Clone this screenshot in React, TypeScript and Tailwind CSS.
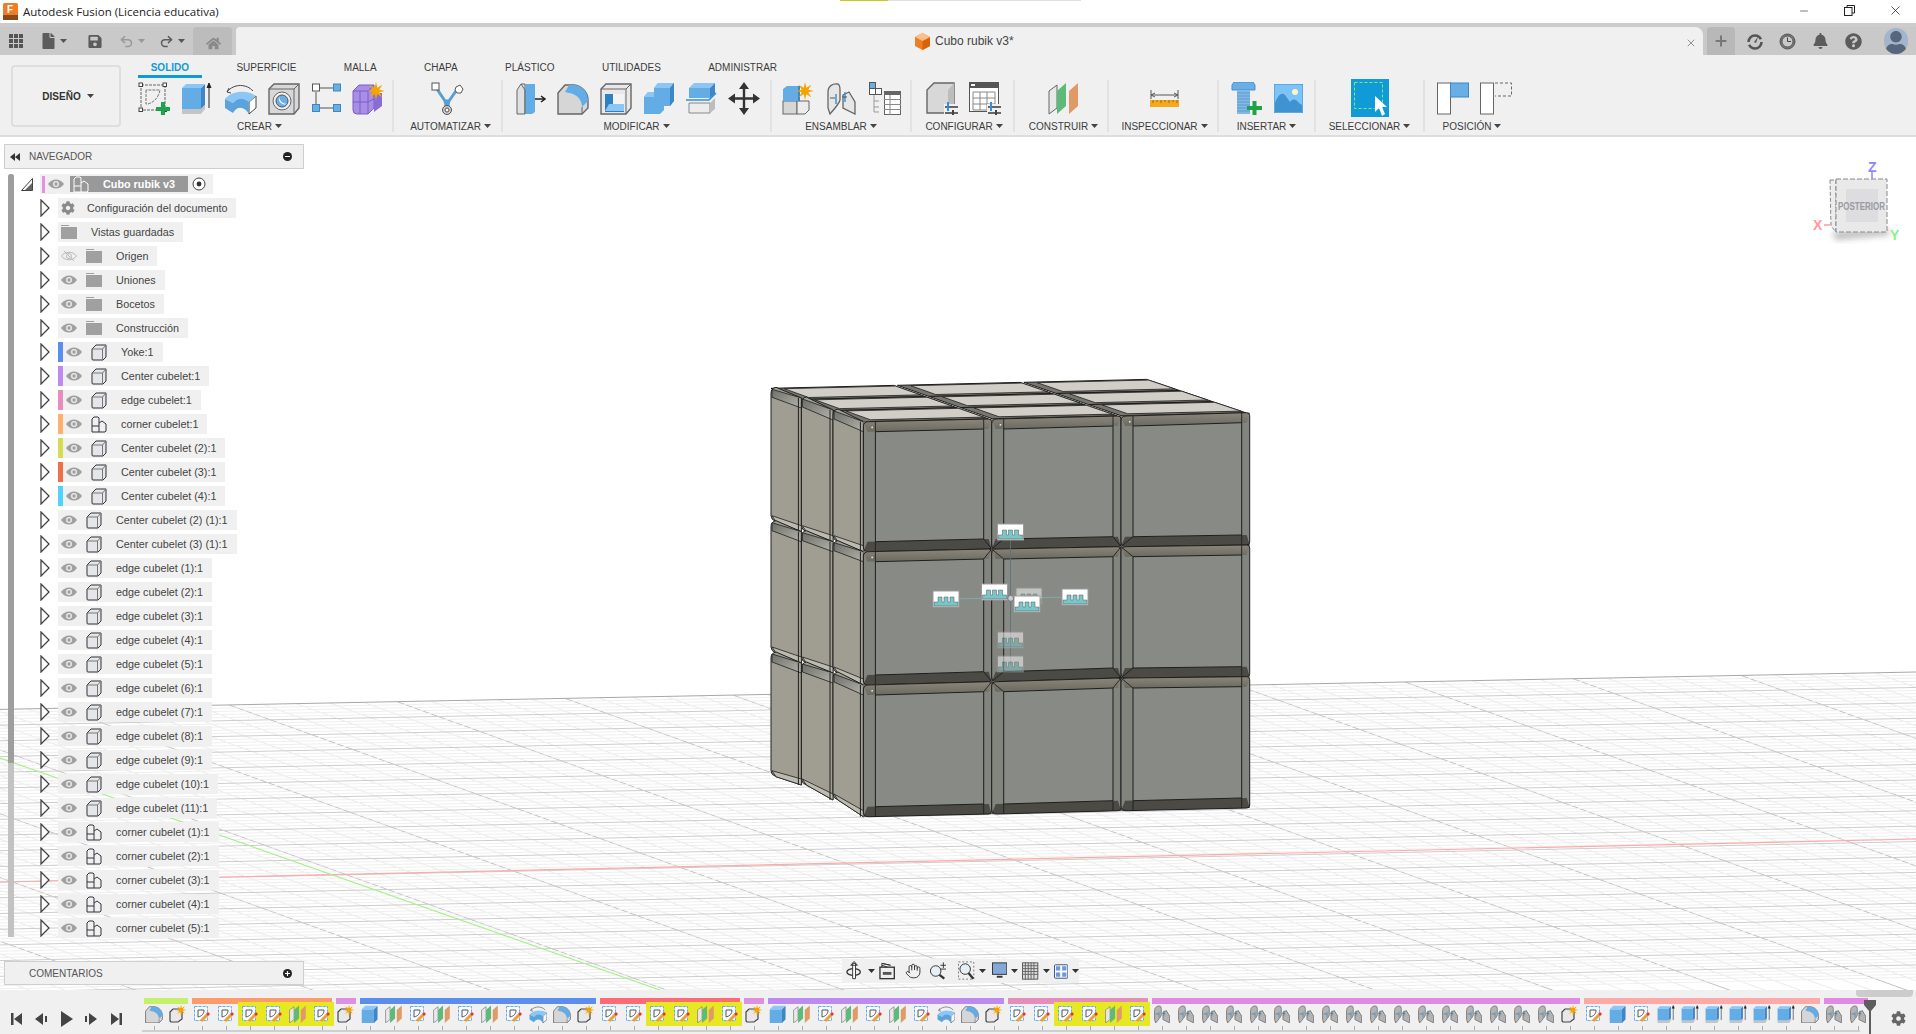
import type { ReactNode } from "react";
import { FaBell, FaCog, FaFile, FaHome, FaQuestionCircle, FaSave, FaUser } from "react-icons/fa";
import { Hand, Minus, Plus, Redo2, Undo2, X } from "lucide-react";

const lerp = (a: number, b: number, t: number) => a + (b - a) * t;
const poly = (pts: number[][]) => pts.map((p) => p.join(",")).join(" ");

function starPoints(cx: number, cy: number, r1: number, r2: number, n = 8) {
  const out: number[][] = [];
  for (let i = 0; i < n * 2; i++) {
    const r = i % 2 ? r2 : r1;
    const a = (Math.PI * i) / n;
    out.push([cx + r * Math.cos(a), cy + r * Math.sin(a)]);
  }
  return poly(out);
}

function Svg({ w, h, s = 1, children }: { w: number; h: number; s?: number; children: ReactNode }) {
  return (
    <svg width={w * s} height={h * s} viewBox={`0 0 ${w} ${h}`} className="shrink-0">
      {children}
    </svg>
  );
}

function Caret({ color = "#444" }: { color?: string }) {
  return (
    <svg width="7" height="4" viewBox="0 0 7 4" className="shrink-0">
      <path d="M0 0H7L3.5 4Z" fill={color} />
    </svg>
  );
}

// ---- ribbon icons ----
function SketchIcon() {
  return (
    <Svg w={32} h={33}>
      <rect x="3" y="3" width="24" height="25" fill="none" stroke="#666" strokeDasharray="3 1" />
      {[[1, 1], [25, 1], [1, 26], [25, 26]].map(([x, y]) => (
        <rect key={`${x}-${y}`} x={x} y={y} width="3.5" height="3.5" fill="#fff" stroke="#444" />
      ))}
      <path d="M8 8V22H10C17 20 21 14 22 8Z" fill="none" stroke="#777" strokeDasharray="3 1" />
      <path d="M18 27H32M25 20V33" stroke="#1fa34a" strokeWidth="4" />
    </Svg>
  );
}

function ExtrudeIcon({ s = 1, arrow = true }: { s?: number; arrow?: boolean }) {
  return (
    <Svg w={31} h={32} s={s}>
      <path d="M1 6H20V27H1Z" fill="#63ace5" />
      <path d="M20 6L24 2V23L20 27Z" fill="#3f86c4" />
      <path d="M1 6L5 2H24L20 6Z" fill="#8cc6f5" />
      {arrow && <path d="M1 27H20L24 23V27L20 32H1Z" fill="#c4c4c4" />}
      {arrow && <path d="M28 26V3M26 6L28 1L30 6" fill="#222" stroke="#222" />}
    </Svg>
  );
}

function SolidBox({ s = 1 }: { s?: number }) {
  return (
    <Svg w={24} h={26} s={s}>
      <path d="M1 6H18V25H1Z" fill="#63ace5" />
      <path d="M18 6L23 1V20L18 25Z" fill="#3f86c4" />
      <path d="M1 6L6 1H23L18 6Z" fill="#8cc6f5" />
    </Svg>
  );
}

function SweepIcon({ s = 1 }: { s?: number }) {
  return (
    <Svg w={33} h={33} s={s}>
      <path d="M25 20L32 14V26L25 32Z" fill="#fff" stroke="#444" />
      <path d="M1 17C8 8 24 8 32 14L25 20C19 15 13 16 9 21Z" fill="#8cc6f5" />
      <path d="M1 17L9 21C13 16 19 15 25 20V32C20 24 13 24 9 31L1 26Z" fill="#5ba3dd" />
      <path d="M3 10C10 1 23 2 29 9M5 6L3 10L7 11" fill="none" stroke="#444" />
    </Svg>
  );
}

function HoleIcon() {
  return (
    <Svg w={32} h={33}>
      <path d="M1 7L6 2H31V26L26 32H1Z" fill="#d8d8d8" stroke="#666" strokeWidth="1.4" />
      <path d="M1 7H26V32M26 7L31 2" fill="none" stroke="#666" />
      <circle cx="14" cy="19" r="9" fill="#efefef" stroke="#666" />
      <circle cx="14" cy="19" r="6" fill="#6aaee6" stroke="#555" />
      <path d="M11 15A6 6 0 0 0 19 22A8 8 0 0 1 11 15Z" fill="#fff" />
    </Svg>
  );
}

function PatternIcon() {
  return (
    <Svg w={29} h={30}>
      <path d="M7 5H21M4 9V21M7 25H21" stroke="#555" />
      <rect x="0.5" y="1" width="7" height="7" fill="#fff" stroke="#555" />
      <rect x="21.5" y="1" width="7" height="7" fill="#6aaee6" stroke="#3f86c4" />
      <rect x="0.5" y="21.5" width="7" height="7" fill="#6aaee6" stroke="#3f86c4" />
      <rect x="21.5" y="21.5" width="7" height="7" fill="#6aaee6" stroke="#3f86c4" />
    </Svg>
  );
}

function NewFormIcon() {
  return (
    <Svg w={32} h={33}>
      <path d="M1 9L7 3H22V26L16 32H5Q1 32 1 28Z" fill="#a98ee6" stroke="#7a5cc8" />
      <path d="M1 9H16V32M16 9L22 3M1 20H16L27 14M8 9V32" fill="none" stroke="#7a5cc8" />
      <path d="M22 11H30V24L22 30Z" fill="#8a6cd6" />
      <polygon points={starPoints(24, 9, 9, 3.5)} fill="#f5a300" />
    </Svg>
  );
}

function AutomateIcon() {
  return (
    <Svg w={33} h={33}>
      <path d="M6 7L14 19C15 21 15 23 15 26M25 9L18 19C17 21 17 23 17 26M14 19H18" fill="none" stroke="#5a9fd4" strokeWidth="3" />
      <rect x="1" y="1" width="7" height="7" fill="#fff" stroke="#555" />
      <polygon points="25,5 29,3 32,7 30,11 26,11 24,8" fill="#fff" stroke="#555" />
      <circle cx="16" cy="28" r="4.5" fill="#ccc" stroke="#555" />
      <circle cx="16" cy="28" r="2" fill="#fff" stroke="#555" />
    </Svg>
  );
}

function PressPullIcon() {
  return (
    <Svg w={30} h={33}>
      <path d="M1 8L5 2H9V32H1Z" fill="#e0e0e0" stroke="#666" />
      <path d="M9 2H19V30L16 32H9Z" fill="#63ace5" />
      <path d="M5 2L9 8V32" fill="none" stroke="#666" />
      <path d="M19 17H28M25 14L29 17L25 20" fill="none" stroke="#222" strokeWidth="1.5" />
    </Svg>
  );
}

function FilletIcon({ s = 1 }: { s?: number }) {
  return (
    <Svg w={32} h={33} s={s}>
      <path d="M1 11L8 3H16C24 3 31 10 31 18V26L25 32H1Z" fill="#d6d6d6" stroke="#666" strokeWidth="1.4" />
      <path d="M12 3H17C25 3 31 10 31 19L25 25C25 18 20 12 12 11L8 10Z" fill="#63ace5" />
      <path d="M25 25V32" stroke="#666" />
    </Svg>
  );
}

function ShellIcon() {
  return (
    <Svg w={32} h={33}>
      <path d="M1 7L6 2H31V26L26 32H1Z" fill="#e8e8e8" stroke="#666" strokeWidth="1.4" />
      <path d="M1 7H26V32M26 7L31 2" fill="none" stroke="#666" />
      <path d="M5 12H13V24H24V30H5Z" fill="#2f7fc4" />
      <path d="M13 12H24V24H13Z" fill="#f3f3f3" />
      <path d="M9 22H24V29H5Z" fill="#8cc6f5" />
    </Svg>
  );
}

function CombineIcon() {
  return (
    <Svg w={32} h={33}>
      <path d="M11 6L15 1H31V19L27 24H11Z" fill="#63ace5" />
      <path d="M15 1H31L27 6H11Z" fill="#8cc6f5" />
      <path d="M27 6L31 1V19L27 24Z" fill="#3f86c4" />
      <path d="M1 15L5 10H21V28L17 32H1Z" fill="#63ace5" />
      <path d="M5 10H11V15H1Z" fill="#8cc6f5" />
    </Svg>
  );
}

function SplitIcon() {
  return (
    <Svg w={31} h={33}>
      <path d="M3 6H24V16H3Z" fill="#63ace5" />
      <path d="M3 6L8 1H29L24 6Z" fill="#8cc6f5" />
      <path d="M24 6L29 1V12L24 16Z" fill="#3f86c4" />
      <path d="M0 18H23L30 11" fill="none" stroke="#2f8fe0" strokeWidth="1.6" />
      <path d="M3 21H24V31H3Z" fill="#ececec" stroke="#888" />
      <path d="M24 21L29 16V27L24 31Z" fill="#bdbdbd" />
    </Svg>
  );
}

function MoveIcon() {
  return (
    <Svg w={32} h={33}>
      <path d="M16 3V30M2 16.5H30" stroke="#333" strokeWidth="2.4" />
      <path d="M16 0L21 7H11ZM16 33L21 26H11ZM0 16.5L7 11.5V21.5ZM32 16.5L25 11.5V21.5Z" fill="#333" />
    </Svg>
  );
}

function AsmNewIcon() {
  return (
    <Svg w={32} h={33}>
      <rect x="1" y="19" width="14" height="13" fill="#d6d6d6" stroke="#666" />
      <path d="M15 19H27V28L23 32H15Z" fill="#ececec" stroke="#666" />
      <path d="M1 7L5 4H17V19H1Z" fill="#63ace5" />
      <path d="M17 4V19" stroke="#3f86c4" strokeWidth="2" />
      <polygon points={starPoints(23, 9, 9, 3.5)} fill="#f5a300" />
    </Svg>
  );
}

function JointIcon({ s = 1, dark = false }: { s?: number; dark?: boolean }) {
  const fill = dark ? "#b4b4b4" : "#e6e6e6";
  return (
    <Svg w={29} h={33} s={s}>
      <path d="M1 26V10C1 4 6 1 11 2C13 3 13 6 13 8V18C12 22 8 26 3 32Z" fill={fill} stroke="#666" strokeWidth="1.3" />
      <path d="M16 13L22 10L28 20V32L16 26Z" fill={fill} stroke="#666" strokeWidth="1.3" />
      <path d="M9 12V22M18 10V20" stroke="#2f8fe0" strokeWidth="1.4" />
      <path d="M3 16H8M15 15H20" stroke="#555" />
    </Svg>
  );
}

function JointTableIcon() {
  return (
    <Svg w={32} h={33}>
      <rect x="0.5" y="0.5" width="6" height="6" fill="#6aaee6" stroke="#555" />
      <rect x="0.5" y="6.5" width="6" height="6" fill="#fff" stroke="#555" />
      <rect x="6.5" y="6.5" width="6" height="6" fill="#fff" stroke="#555" />
      <path d="M5 13V30H10M5 19H10M5 25H10" fill="none" stroke="#999" />
      <rect x="15.5" y="9.5" width="16" height="23" fill="#fff" stroke="#666" />
      <rect x="15" y="9" width="17" height="4" fill="#666" />
      <path d="M15 17.5H32M15 22.5H32M15 27.5H32M21 13V33" stroke="#888" />
    </Svg>
  );
}

function SliderBits() {
  return (
    <>
      <rect x="18" y="22" width="14" height="10" fill="#f0f0f0" />
      <path d="M19 25H32M19 31H32" stroke="#666" strokeWidth="2" />
      <path d="M22 20V29" stroke="#2f8fe0" strokeWidth="2" />
      <rect x="26" y="28" width="2" height="5" fill="#444" />
    </>
  );
}

function ConfigBoxIcon() {
  return (
    <Svg w={32} h={33}>
      <path d="M1 8L8 1H28V24L22 31H1Z" fill="#d8d8d8" stroke="#666" strokeWidth="1.4" />
      <path d="M22 8L28 1V24L22 31Z" fill="#bdbdbd" />
      <SliderBits />
    </Svg>
  );
}

function ConfigTableIcon() {
  return (
    <Svg w={32} h={33}>
      <rect x="0.5" y="0.5" width="29" height="29" fill="#fff" stroke="#555" />
      <rect x="0" y="0" width="30" height="6" fill="#555" />
      <rect x="2" y="2" width="4" height="2" fill="#fff" />
      <path d="M4 10H26V28H4ZM4 16H26M4 22H26M11 10V28M18 10V28" fill="none" stroke="#888" />
      <SliderBits />
    </Svg>
  );
}

function PlaneIcon({ s = 1 }: { s?: number }) {
  return (
    <Svg w={31} h={33} s={s}>
      <path d="M1 9L9 3V26L1 32Z" fill="#e8e8e8" stroke="#666" />
      <path d="M9 9L18 1V24L9 32Z" fill="#5dbb7a" />
      <path d="M21 9L30 1V24L21 32Z" fill="#e09a68" />
    </Svg>
  );
}

function MeasureIcon() {
  return (
    <Svg w={29} h={17}>
      <path d="M1 0V9M28 0V9M2 5H27M5 3L1 5L5 7M24 3L28 5L24 7" fill="none" stroke="#555" />
      <rect x="0" y="10" width="29" height="7" fill="#f5a81c" />
      <path d="M3 10V13M7 10V12M11 10V13M15 10V12M19 10V13M23 10V12M27 10V13" stroke="#9c6a00" />
    </Svg>
  );
}

function BoltIcon() {
  return (
    <Svg w={31} h={33}>
      <path d="M1 3L3 0H22L24 3V8H1Z" fill="#6aaee6" stroke="#4a8fcc" />
      <rect x="6" y="8" width="13" height="24" fill="#84b8e4" />
      <path d="M6 11H19M6 14H19M6 17H19M6 20H19M6 23H19M6 26H19M6 29H19" stroke="#5a9ad0" />
      <path d="M16 26H31M23.5 19V33" stroke="#1fa34a" strokeWidth="4" />
    </Svg>
  );
}

function ImageIcon() {
  return (
    <Svg w={29} h={29}>
      <rect x="0" y="0" width="29" height="29" fill="#7cc3f7" stroke="#3f8fcc" />
      <circle cx="21" cy="8" r="3" fill="#fff3c0" />
      <path d="M1 28V19C4 11 8 8 11 11L16 18C19 14 22 15 25 19L28 21V28Z" fill="#3f93d0" />
    </Svg>
  );
}

function SelectIcon() {
  return (
    <div className="w-[38px] h-[38px] shrink-0 bg-[#0f9ad8] flex items-center justify-center">
      <Svg w={38} h={38}>
        <rect x="3.5" y="3.5" width="28" height="26" fill="none" stroke="#8ce86a" strokeDasharray="3 2" />
        <path d="M24 17V33L28 29L31 37L34 35L31 28L36 28Z" fill="#fff" />
      </Svg>
    </div>
  );
}

function PosAIcon() {
  return (
    <Svg w={32} h={33}>
      <rect x="0.5" y="1" width="13" height="31" fill="#fff" stroke="#666" />
      <rect x="13.5" y="1" width="18" height="14" fill="#6aaee6" stroke="#3f86c4" />
    </Svg>
  );
}

function PosBIcon() {
  return (
    <Svg w={32} h={33}>
      <rect x="0.5" y="1" width="13" height="31" fill="#fff" stroke="#666" />
      <path d="M15 1H31.5V14H15" fill="none" stroke="#666" strokeDasharray="3 2" />
    </Svg>
  );
}

// ---- timeline-only icons ----
function SketchT() {
  return (
    <Svg w={18} h={18}>
      <rect x="1.5" y="1.5" width="13" height="14" fill="#f8fbff" stroke="#6aaee6" strokeDasharray="3 1" />
      <path d="M5 5V12C9 11 11 9 11 5Z" fill="none" stroke="#555" />
      <path d="M8 16L14 10" stroke="#f0a030" strokeWidth="3" />
      <path d="M14 10L16 8" stroke="#e33" strokeWidth="3" />
    </Svg>
  );
}

function StarT() {
  return (
    <Svg w={18} h={18}>
      <path d="M1 7L4 4H13V14L9 17H2L1 16Z" fill="#e8e8e8" stroke="#444" strokeWidth="1.2" />
      <polygon points={starPoints(12, 5, 5.5, 2)} fill="#f5a300" />
    </Svg>
  );
}

type TimelineKind = "fillet" | "star" | "sketch" | "box" | "plane" | "sweep" | "joint" | "extrude";

function TimelineIcon({ kind }: { kind: TimelineKind }) {
  if (kind === "fillet") return <FilletIcon s={0.56} />;
  if (kind === "star") return <StarT />;
  if (kind === "sketch") return <SketchT />;
  if (kind === "box") return <SolidBox s={0.72} />;
  if (kind === "plane") return <PlaneIcon s={0.56} />;
  if (kind === "sweep") return <SweepIcon s={0.56} />;
  if (kind === "joint") return <JointIcon s={0.56} dark />;
  return <ExtrudeIcon s={0.58} />;
}

const midSeq: TimelineKind[] = ["box", "plane", "sketch", "plane", "sketch", "plane", "sketch", "sweep", "fillet", "star"];
const timelineItems: TimelineKind[] = [
  "fillet", "star",
  "sketch", "sketch", "sketch", "sketch", "plane", "sketch", "star",
  ...midSeq,
  "sketch", "sketch", "sketch", "sketch", "plane", "sketch", "star",
  ...midSeq,
  "sketch", "sketch", "sketch", "sketch", "plane", "sketch",
  ...Array<TimelineKind>(17).fill("joint"), "star",
  "sketch", "box", "sketch", "extrude", "extrude", "extrude", "extrude", "extrude", "extrude", "fillet",
  "joint", "joint",
];
const highlighted = new Set([4, 5, 6, 7, 21, 22, 23, 24, 38, 39, 40, 41]);

const timelineBars = [
  { w: "w-[44px]", c: "bg-[#c5f06a]" },
  { w: "w-[140px]", c: "bg-[#ff9b6b]" },
  { w: "w-[20px]", c: "bg-[#df8fdf]" },
  { w: "w-[236px]", c: "bg-[#5b8def]" },
  { w: "w-[140px]", c: "bg-[#ff6b75]" },
  { w: "w-[20px]", c: "bg-[#df8fdf]" },
  { w: "w-[236px]", c: "bg-[#bd8bf0]" },
  { w: "w-[140px]", c: "bg-[#e58ebc]" },
  { w: "w-[428px]", c: "bg-[#e08ae6]" },
  { w: "w-[236px]", c: "bg-[#ffa8a8]" },
  { w: "w-[44px]", c: "bg-[#e08ae6]" },
];

// ---- tree icons ----
function Arrow() {
  return (
    <svg width="10" height="18" viewBox="0 0 10 18" className="shrink-0">
      <path d="M1 1L9 9L1 17Z" fill="#fff" stroke="#444" strokeWidth="1.3" />
    </svg>
  );
}

function Eye({ off = false }: { off?: boolean }) {
  if (off) {
    return (
      <svg width="16" height="12" viewBox="0 0 16 12" className="shrink-0">
        <path d="M0.5 6C4 1 12 1 15.5 6C12 11 4 11 0.5 6Z" fill="none" stroke="#bbb" />
        <circle cx="8" cy="6" r="2.5" fill="none" stroke="#bbb" />
        <path d="M3 1L13 11" stroke="#bbb" />
      </svg>
    );
  }
  return (
    <svg width="16" height="12" viewBox="0 0 16 12" className="shrink-0">
      <path d="M0 6C4 0 12 0 16 6C12 12 4 12 0 6Z" fill="#a0a0a0" />
      <circle cx="8" cy="6" r="3" fill="#ececec" />
      <circle cx="8" cy="6" r="1.7" fill="#a0a0a0" />
    </svg>
  );
}

function Folder() {
  return (
    <svg width="16" height="14" viewBox="0 0 16 14" className="shrink-0">
      <path d="M0 0H8V1H0ZM0 2H16V14H0Z" fill="#a0a0a0" />
    </svg>
  );
}

function CubeSmall() {
  return (
    <svg width="16" height="17" viewBox="0 0 16 17" className="shrink-0">
      <path d="M1 5L5 1H15V13L12 16H2Q1 16 1 15Z" fill="#e4e6ea" stroke="#333" />
      <path d="M1 5H11.5V16M11.5 5L15 1" fill="none" stroke="#777" />
    </svg>
  );
}

function MultiCube({ light = false }: { light?: boolean }) {
  const line = light ? "#fff" : "#333";
  return (
    <svg width="16" height="17" viewBox="0 0 16 17" className="shrink-0">
      <path d="M1 3L3 1H7L8 2V7L11 5L15 8V15L14 16H1Z" fill={light ? "#999" : "#f0f0f4"} stroke={line} />
      <path d="M1 10H8M8 7V16" fill="none" stroke={line} />
    </svg>
  );
}

type RowKind = "gear" | "saved" | "folder" | "folderOff" | "cube" | "multi";
interface TreeItem {
  label: string;
  kind: RowKind;
  stripe?: string;
}

const treeItems: TreeItem[] = [
  { label: "Configuración del documento", kind: "gear" },
  { label: "Vistas guardadas", kind: "saved" },
  { label: "Origen", kind: "folderOff" },
  { label: "Uniones", kind: "folder" },
  { label: "Bocetos", kind: "folder" },
  { label: "Construcción", kind: "folder" },
  { label: "Yoke:1", kind: "cube", stripe: "bg-[#5b8def]" },
  { label: "Center cubelet:1", kind: "cube", stripe: "bg-[#bd8bf0]" },
  { label: "edge cubelet:1", kind: "cube", stripe: "bg-[#e58ebc]" },
  { label: "corner cubelet:1", kind: "multi", stripe: "bg-[#ffb06b]" },
  { label: "Center cubelet (2):1", kind: "cube", stripe: "bg-[#d4dc50]" },
  { label: "Center cubelet (3):1", kind: "cube", stripe: "bg-[#ee7048]" },
  { label: "Center cubelet (4):1", kind: "cube", stripe: "bg-[#4fd2fb]" },
  { label: "Center cubelet (2) (1):1", kind: "cube" },
  { label: "Center cubelet (3) (1):1", kind: "cube" },
  ...Array.from({ length: 11 }, (_, i): TreeItem => ({ label: `edge cubelet (${i + 1}):1`, kind: "cube" })),
  ...Array.from({ length: 5 }, (_, i): TreeItem => ({ label: `corner cubelet (${i + 1}):1`, kind: "multi" })),
];

function TreeRow({ item }: { item: TreeItem }) {
  return (
    <div className="flex items-center h-5 pl-[40px]">
      <Arrow />
      <div className="ml-[8px] flex items-center h-5 bg-[#f0f0f0] pr-[9px] text-[10.8px] text-[#444] whitespace-nowrap">
        {item.stripe && <div className={`w-[5px] h-5 ${item.stripe}`} />}
        {item.kind === "gear" && (
          <>
            <FaCog className="ml-[3px] w-[14px] h-[14px] text-[#8a8a8a]" />
            <span className="ml-[12px]">{item.label}</span>
          </>
        )}
        {item.kind === "saved" && (
          <>
            <div className="ml-[3px]"><Folder /></div>
            <span className="ml-[14px]">{item.label}</span>
          </>
        )}
        {item.kind !== "gear" && item.kind !== "saved" && (
          <>
            <div className="ml-[3px]"><Eye off={item.kind === "folderOff"} /></div>
            <div className="ml-[9px]">
              {item.kind === "cube" && <CubeSmall />}
              {item.kind === "multi" && <MultiCube />}
              {(item.kind === "folder" || item.kind === "folderOff") && <Folder />}
            </div>
            <span className="ml-[14px]">{item.label}</span>
          </>
        )}
      </div>
    </div>
  );
}

function Navigator() {
  return (
    <div className="absolute left-0 top-0 w-[320px]">
      <div className="ml-[4px] mt-[7px] w-[300px] h-[25px] bg-[#f0f0f0] border border-[#cfcfcf] flex items-center text-[10px] text-[#555]">
        <svg width="10" height="8" viewBox="0 0 10 8" className="ml-[5px]">
          <path d="M5 0V8L0 4ZM10 0V8L5 4Z" fill="#333" />
        </svg>
        <span className="ml-[9px]">NAVEGADOR</span>
        <div className="ml-auto mr-[11px] w-[9px] h-[9px] rounded-full bg-[#222] flex items-center justify-center">
          <Minus className="w-[7px] h-[7px] text-white" strokeWidth={4} />
        </div>
      </div>
      <div className="relative mt-[5px] flex flex-col gap-1">
        <div className="absolute left-[8px] top-0 w-[6px] h-[763px] bg-[#c2c2c2] rounded-t">
          <div className="w-[6px] h-[589px] bg-[#9e9e9e] rounded-t" />
        </div>
        <div className="flex items-center h-5 pl-[21px]">
          <svg width="12" height="13" viewBox="0 0 12 13" className="shrink-0">
            <path d="M0.5 12.5H11.5V0.5Z" fill="#fff" stroke="#444" />
            <path d="M4 12L11 12V5Z" fill="#666" />
          </svg>
          <div className="ml-[7px] flex items-center h-5 w-[173px] bg-[#f0f0f0]">
            <div className="ml-[2px] w-[3px] h-[17px] bg-[#e590e0]" />
            <div className="ml-[3px]"><Eye /></div>
            <div className="ml-[6px] w-[118px] h-[16px] bg-[#999] flex items-center">
              <div className="ml-[3px]"><MultiCube light /></div>
              <span className="ml-[14px] text-[10.8px] font-bold text-white whitespace-nowrap">Cubo rubik v3</span>
            </div>
            <svg width="14" height="14" viewBox="0 0 14 14" className="ml-[4px]">
              <circle cx="7" cy="7" r="6" fill="#fff" stroke="#444" />
              <circle cx="7" cy="7" r="2.4" fill="#333" />
            </svg>
          </div>
        </div>
        {treeItems.map((item) => (
          <TreeRow key={item.label} item={item} />
        ))}
      </div>
    </div>
  );
}

// ---- 3d viewport ----
function FloorLines() {
  const h0 = 709.4;
  const slope = -0.0195;
  const horiz: ReactNode[] = [];
  for (let k = 1; k < 100; k++) {
    const y = h0 + k * 3.14;
    const major = k % 5 === 0;
    horiz.push(
      <line key={`h${k}`} x1="0" y1={y} x2="1916" y2={y + 1916 * (slope - k * 0.00003)} stroke={major ? "#cdcdcd" : "#efefef"} strokeWidth="1" />
    );
  }
  const diag: ReactNode[] = [];
  for (let k = -40; k < 60; k++) {
    const x0 = -107 + k * 33.6;
    const y0 = h0 + slope * x0;
    const major = k % 5 === 0;
    diag.push(
      <line key={`d${k}`} x1={x0} y1={y0} x2={x0 + 1500} y2={y0 + 1500 * 0.36} stroke={major ? "#c2c2c2" : "#ebebeb"} strokeWidth="1" />
    );
  }
  return (
    <>
      <clipPath id="floor">
        <polygon points="0,709.4 1916,672 1916,990 0,990" />
      </clipPath>
      <g clipPath="url(#floor)">
        {diag}
        {horiz}
      </g>
      <line x1="0" y1="709.4" x2="1916" y2="672" stroke="#a8a8a8" />
      <line x1="0" y1="882" x2="1916" y2="839" stroke="#ffa9a9" strokeWidth="1.2" />
      <line x1="0" y1="758" x2="660" y2="990" stroke="#a8f08c" strokeWidth="1.2" />
    </>
  );
}

function FrontCubelet({ c, r }: { c: number; r: number }) {
  const X = [863.4, 991.7, 1121, 1249.7];
  const Y = [
    [421.7, 419, 416, 412.7],
    [551.7, 549, 546.7, 545],
    [685, 681.7, 678, 676.7],
    [816.7, 814, 810.7, 808],
  ];
  const tl = [X[c], Y[r][c]];
  const tr = [X[c + 1], Y[r][c + 1]];
  const bl = [X[c], Y[r + 1][c]];
  const br = [X[c + 1], Y[r + 1][c + 1]];
  const il = tl[0] + 12;
  const ir = tr[0] - 8;
  const itl = [il, tl[1] + 10];
  const itr = [ir, tr[1] + 10];
  const ibl = [il, bl[1] - 10];
  const ibr = [ir, br[1] - 10];
  // chamfers only where four cubelets meet; elsewhere the inner line runs to the edge
  const chamfers = [
    r > 0 && c > 0 ? `M${itl[0]} ${itl[1]}L${tl[0]} ${tl[1]}` : `M${il} ${tl[1]}V${itl[1]}`,
    r > 0 && c < 2 ? `M${itr[0]} ${itr[1]}L${tr[0]} ${tr[1]}` : `M${ir} ${tr[1]}V${itr[1]}`,
    r < 2 && c > 0 ? `M${ibl[0]} ${ibl[1]}L${bl[0]} ${bl[1]}` : `M${il} ${bl[1]}V${ibl[1]}`,
    r < 2 && c < 2 ? `M${ibr[0]} ${ibr[1]}L${br[0]} ${br[1]}` : `M${ir} ${br[1]}V${ibr[1]}`,
  ];
  return (
    <g>
      <polygon points={poly([tl, tr, br, bl])} fill="#82847e" />
      <polygon points={poly([tl, tr, [tr[0] - 3, itr[1]], [tl[0] + 4, itl[1]]])} fill="url(#cubeTop)" />
      <polygon points={poly([[bl[0] + 4, ibl[1]], [br[0] - 3, ibr[1]], br, bl])} fill="#4b4a44" />
      <polygon points={poly([itl, itr, ibr, ibl])} fill="#888a85" stroke="#1e1e1e" strokeWidth="1" />
      <path
        d={`M${tl[0] + 5} ${tl[1]}L${tr[0] - 3} ${tr[1]}Q${tr[0]} ${tr[1]} ${tr[0]} ${tr[1] + 3}L${br[0]} ${br[1] - 3}Q${br[0]} ${br[1]} ${br[0] - 3} ${br[1]}L${bl[0] + 5} ${bl[1]}Q${bl[0]} ${bl[1]} ${bl[0]} ${bl[1] - 5}L${tl[0]} ${tl[1] + 5}Q${tl[0]} ${tl[1]} ${tl[0] + 5} ${tl[1]}Z`}
        fill="none"
        stroke="#1e1e1e"
        strokeWidth="1"
      />
      <path d={chamfers.join("")} stroke="#1e1e1e" strokeWidth="0.9" />
      {(r === 0 || c === 0) && <rect x={tl[0] + 8} y={tl[1] + 5} width="1.5" height="1.5" fill="#eee" />}
    </g>
  );
}

function SideCubelet({ c, r }: { c: number; r: number }) {
  const X = [771, 801.4, 833, 863.4];
  const Y = [
    [388.3, 398, 410, 421.7],
    [521.7, 531.7, 541.7, 551.7],
    [653, 663, 673, 685],
    [776.7, 785, 800, 816.7],
  ];
  const tl = [X[c], Y[r][c]];
  const tr = [X[c + 1], Y[r][c + 1]];
  const bl = [X[c], Y[r + 1][c]];
  const br = [X[c + 1], Y[r + 1][c + 1]];
  return (
    <g>
      <path
        d={`M${tl[0] + 5} ${tl[1] - 1}L${tr[0]} ${tr[1]}V${br[1]}L${bl[0] + 5} ${bl[1]}Q${bl[0]} ${bl[1] - 2} ${bl[0]} ${bl[1] - 6}V${tl[1] + 5}Q${tl[0]} ${tl[1]} ${tl[0] + 5} ${tl[1] - 1}Z`}
        fill="#a09e92"
        stroke="#1e1e1e"
        strokeWidth="1"
      />
      <polygon points={poly([[tl[0] + 1, tl[1] + 1], tr, [tr[0], tr[1] + 10], [tl[0] + 1, tl[1] + 9]])} fill="url(#cubeSide)" stroke="#1e1e1e" strokeWidth="0.8" />
      <polygon points={poly([[bl[0] + 1, bl[1] - 6], [br[0], br[1] - 6], br, [bl[0] + 5, bl[1]]])} fill="#bdbbaf" stroke="#1e1e1e" strokeWidth="0.8" />
      <line x1={tr[0] - 3} y1={tr[1]} x2={br[0] - 3} y2={br[1]} stroke="#1e1e1e" strokeWidth="1" />
    </g>
  );
}

function TopCubelet({ c, r }: { c: number; r: number }) {
  const BL = [771, 388.3];
  const BR = [1150.3, 379.3];
  const FR = [1249.7, 412.7];
  const FL = [863.4, 421.7];
  const at = (u: number, v: number) => {
    const a = [lerp(BL[0], BR[0], u), lerp(BL[1], BR[1], u)];
    const b = [lerp(FL[0], FR[0], u), lerp(FL[1], FR[1], u)];
    return [lerp(a[0], b[0], v), lerp(a[1], b[1], v)];
  };
  const u0 = c / 3;
  const u1 = (c + 1) / 3 - 0.01;
  const v0 = r / 3;
  const v1 = (r + 1) / 3;
  const u = u0 + 0.03;
  return (
    <g>
      <polygon points={poly([at(u0, v0), at(u1, v0), at(u1, v1), at(u0, v1)])} fill="#77766e" stroke="#1e1e1e" strokeWidth="1" />
      <polygon points={poly([at(u, v0 + 0.02), at(u1, v0 + 0.02), at(u1, v1 - 0.05), at(u, v1 - 0.05)])} fill="#d0cec6" stroke="#1e1e1e" strokeWidth="0.8" />
    </g>
  );
}

function JointGlyph({ x, y, faded = false }: { x: number; y: number; faded?: boolean }) {
  return (
    <g transform={`translate(${x - 13} ${y - 8})`} opacity={faded ? 0.5 : 1}>
      <rect x="0" y="0" width="26" height="16" fill="#fff" stroke="#9a9a9a" />
      <path d="M1 15V11H5V6H9V11H11V6H15V11H17V6H21V11H25V15Z" fill="#78c6c8" stroke="#555" strokeWidth="0.5" />
    </g>
  );
}

function CubeDrawing() {
  const idx = [0, 1, 2];
  return (
    <>
      <defs>
        <linearGradient id="cubeTop" x1="0" y1="0" x2="0" y2="1">
          <stop offset="0" stopColor="#8b867a" />
          <stop offset="1" stopColor="#6b6a60" />
        </linearGradient>
        <linearGradient id="cubeSide" x1="0" y1="0" x2="1" y2="1">
          <stop offset="0" stopColor="#6f6f6a" />
          <stop offset="1" stopColor="#b4b4ac" />
        </linearGradient>
      </defs>
      {idx.map((c) => idx.map((r) => <TopCubelet key={`t${c}${r}`} c={c} r={r} />))}
      {idx.map((c) => idx.map((r) => <SideCubelet key={`s${c}${r}`} c={c} r={r} />))}
      {idx.map((c) => idx.map((r) => <FrontCubelet key={`f${c}${r}`} c={c} r={r} />))}
      <path d="M946 599L1075 597M1010.5 532V665" stroke="#7fb6c0" strokeWidth="1" opacity="0.7" />
      <path d="M1010.5 532V665" stroke="#444" strokeWidth="1" opacity="0.5" />
      <JointGlyph x={1010.5} y={532} />
      <JointGlyph x={946} y={599} />
      <JointGlyph x={994.5} y={592} />
      <JointGlyph x={1029} y={596} faded />
      <JointGlyph x={1027} y={604} />
      <JointGlyph x={1075} y={597} />
      <JointGlyph x={1010.5} y={640} faded />
      <JointGlyph x={1010.5} y={664} faded />
      <circle cx="1010.7" cy="598.3" r="3" fill="#c8ccd0" stroke="#777" />
    </>
  );
}

function ViewCube() {
  return (
    <>
      <defs>
        <filter id="vcShadow" x="-30%" y="-30%" width="160%" height="160%">
          <feGaussianBlur stdDeviation="3" />
        </filter>
      </defs>
      <polygon points="1832,232 1887,228 1890,235 1836,240" fill="#888" opacity="0.55" filter="url(#vcShadow)" />
      <path d="M1830 180H1836V232L1831 226Z" fill="#ededed" stroke="#888" strokeDasharray="4 2" />
      <rect x="1836" y="179" width="51" height="53" fill="#e9e9e9" stroke="#888" strokeDasharray="5 2" />
      <rect x="1846" y="189" width="32" height="33" fill="#dddde0" />
      <text x="1838" y="210" fontSize="10.5" fill="#9a9aa0" fontWeight="700" textLength="47" lengthAdjust="spacingAndGlyphs">POSTERIOR</text>
      <line x1="1872" y1="172" x2="1872" y2="179" stroke="#8888ff" strokeWidth="1.5" />
      <text x="1868" y="172" fontSize="14" fill="#8888ff" fontWeight="700">Z</text>
      <line x1="1824" y1="225" x2="1830" y2="225" stroke="#ff9a9a" strokeWidth="1.5" />
      <text x="1813" y="230" fontSize="14" fill="#ff9a9a" fontWeight="700">X</text>
      <text x="1890" y="240" fontSize="14" fill="#8cf08c" fontWeight="700">Y</text>
    </>
  );
}

function ViewBar() {
  return (
    <div className="absolute left-[842px] top-[822px] w-[237px] h-[24px] bg-[#f0f0f0] flex items-center pl-[3px] gap-[4px]">
      <svg width="20" height="20" viewBox="0 0 20 20">
        <ellipse cx="9" cy="11" rx="7" ry="3.5" fill="none" stroke="#333" strokeWidth="1.4" />
        <path d="M11 2V18H8V2ZM9.5 0L13 4H6Z" fill="#fff" stroke="#333" />
      </svg>
      <Caret color="#333" />
      <svg width="17" height="18" viewBox="0 0 17 18">
        <rect x="1" y="5" width="15" height="12" fill="#eee" stroke="#333" strokeWidth="1.4" />
        <rect x="4" y="10" width="9" height="3" fill="#555" />
        <path d="M3 5L3 1L12 3L3 1M3 3L9 5" stroke="#333" />
      </svg>
      <Hand className="ml-[6px] w-[17px] h-[18px] text-[#333]" strokeWidth={1.4} />
      <svg width="18" height="18" viewBox="0 0 18 18" className="ml-[3px]">
        <circle cx="7" cy="9" r="5.5" fill="#e6eef6" stroke="#333" />
        <path d="M11 13L16 17" stroke="#333" strokeWidth="2.4" />
        <path d="M12 3H18M15 0V6M12 7H18" stroke="#333" />
      </svg>
      <svg width="18" height="20" viewBox="0 0 18 20" className="ml-[8px]">
        <rect x="0.5" y="0.5" width="16" height="18" fill="none" stroke="#777" strokeDasharray="2 2" />
        <circle cx="7.5" cy="8" r="5.5" fill="#e6eef6" stroke="#333" />
        <path d="M11 12L16 18" stroke="#333" strokeWidth="2.4" />
      </svg>
      <Caret color="#333" />
      <svg width="16" height="18" viewBox="0 0 16 18" className="ml-[2px]">
        <rect x="0.5" y="0.5" width="15" height="12" fill="#86a8d8" stroke="#333" />
        <path d="M5 15H11" stroke="#333" strokeWidth="2" />
      </svg>
      <Caret color="#333" />
      <svg width="17" height="18" viewBox="0 0 17 18">
        <rect x="0.5" y="0.5" width="16" height="17" fill="#ddd" stroke="#555" />
        <path d="M3.5 0V18M6.5 0V18M9.5 0V18M12.5 0V18M0 3.5H17M0 6.5H17M0 9.5H17M0 12.5H17" stroke="#666" />
      </svg>
      <Caret color="#333" />
      <svg width="15" height="15" viewBox="0 0 15 15">
        <rect x="0.5" y="0.5" width="14" height="14" rx="1" fill="#fff" stroke="#2f4f80" />
        <rect x="2" y="2" width="4.5" height="4.5" fill="#6f9ad0" />
        <rect x="8.5" y="2" width="4.5" height="4.5" fill="#6f9ad0" />
        <rect x="2" y="8.5" width="4.5" height="4.5" fill="#6f9ad0" />
        <rect x="8.5" y="8.5" width="4.5" height="4.5" fill="#6f9ad0" />
      </svg>
      <Caret color="#333" />
    </div>
  );
}

// ---- ribbon ----
function Group({ className, label, gap, children, last = false, labelClass = "" }: { className: string; label: string; gap: string; children: ReactNode; last?: boolean; labelClass?: string }) {
  return (
    <div className={`${className} h-[52px] flex flex-col items-center ${last ? "" : "border-r-2 border-[#e2e2e2]"}`}>
      <div className={`h-[36px] shrink-0 flex items-center ${gap}`}>{children}</div>
      <div className={`mt-[3px] h-[14px] shrink-0 flex items-center gap-[3px] text-[10px] text-[#3c3c3c] whitespace-nowrap ${labelClass}`}>
        <span>{label}</span>
        <Caret />
      </div>
    </div>
  );
}

const tabs = ["SOLIDO", "SUPERFICIE", "MALLA", "CHAPA", "PLÁSTICO", "UTILIDADES", "ADMINISTRAR"];

function Ribbon() {
  return (
    <div className="h-[82px] bg-[#f0f0f0] border-b-2 border-[#dddddd] flex">
      <div className="w-[127px] shrink-0">
        <div className="ml-[11px] mt-[10px] w-[110px] h-[62px] pl-[4px] border-2 border-[#dedede] rounded flex items-center justify-center gap-[6px] text-[10px] text-[#333] font-bold">
          <span>DISEÑO</span>
          <Caret />
        </div>
      </div>
      <div className="flex flex-col">
        <div className="h-[25px] flex">
          {tabs.map((t, i) => (
            <div key={t} className={`relative px-[23.7px] h-[25px] text-[10px] flex items-center ${i === 0 ? "text-[#0f9ad8] font-bold" : "text-[#3c3c3c]"}`}>
              {t}
              {i === 0 && <div className="absolute left-[11px] right-[11px] bottom-[2px] h-[3px] bg-[#0f9ad8]" />}
            </div>
          ))}
        </div>
        <div className="flex pl-[3px]">
          <Group className="w-[264px]" label="CREAR" gap="gap-[11.5px]" labelClass="pr-[3px]">
            <SketchIcon />
            <ExtrudeIcon />
            <SweepIcon />
            <HoleIcon />
            <PatternIcon />
            <NewFormIcon />
          </Group>
          <Group className="w-[109px]" label="AUTOMATIZAR" gap="gap-0" labelClass="pl-[6px]">
            <AutomateIcon />
          </Group>
          <Group className="w-[269px]" label="MODIFICAR" gap="gap-[11px] pl-[2px]">
            <PressPullIcon />
            <FilletIcon />
            <ShellIcon />
            <CombineIcon />
            <SplitIcon />
            <MoveIcon />
          </Group>
          <Group className="w-[140px]" label="ENSAMBLAR" gap="gap-[13px]">
            <AsmNewIcon />
            <JointIcon />
            <JointTableIcon />
          </Group>
          <Group className="w-[103px]" label="CONFIGURAR" gap="gap-[11px] pl-[2px]" labelClass="pl-[3px]">
            <ConfigBoxIcon />
            <ConfigTableIcon />
          </Group>
          <Group className="w-[94px]" label="CONSTRUIR" gap="gap-0 pl-[4px]" labelClass="pl-[5px]">
            <PlaneIcon />
          </Group>
          <Group className="w-[110px]" label="INSPECCIONAR" gap="gap-0 pl-[2px]" labelClass="pl-[3px]">
            <MeasureIcon />
          </Group>
          <Group className="w-[97px]" label="INSERTAR" gap="gap-[12px]">
            <BoltIcon />
            <ImageIcon />
          </Group>
          <Group className="w-[109px]" label="SELECCIONAR" gap="gap-0">
            <SelectIcon />
          </Group>
          <Group className="w-[100px]" label="POSICIÓN" gap="gap-[11px] pr-[2px]" labelClass="pr-[6px] text-[9.7px]" last>
            <PosAIcon />
            <PosBIcon />
          </Group>
        </div>
      </div>
    </div>
  );
}

function QuickBar() {
  return (
    <div className="h-[28px] bg-[#c9c9c9] flex text-[#5c5c5c]">
      <div className="w-[193px] shrink-0 flex items-center">
        <svg width="14" height="14" viewBox="0 0 14 14" className="ml-[9px]">
          {[0, 5, 10].map((y) => [0, 5, 10].map((x) => <rect key={`${x}${y}`} x={x} y={y} width="4" height="4" fill="#555" />))}
        </svg>
        <FaFile className="ml-[19px] w-[13px] h-[16px]" />
        <div className="ml-[5px]"><Caret color="#555" /></div>
        <FaSave className="ml-[21px] w-[14px] h-[15px]" />
        <Undo2 className="ml-[17px] w-[15px] h-[15px] text-[#999]" strokeWidth={2.4} />
        <div className="ml-[4px]"><Caret color="#999" /></div>
        <Redo2 className="ml-[14px] w-[15px] h-[15px]" strokeWidth={2.4} />
        <div className="ml-[4px]"><Caret color="#555" /></div>
      </div>
      <div className="w-[39px] shrink-0 bg-[#bcbcbc] rounded-t flex items-end justify-center pb-[4px] pl-[2px]">
        <FaHome className="w-[15px] h-[15px] text-[#8a8a8a]" />
      </div>
      <div className="ml-[4px] w-[1467px] shrink-0 bg-[#f0f0f0] rounded-tl rounded-tr-lg flex items-center relative text-[#444]">
        <div className="ml-[679px] flex items-center gap-[5px]">
          <svg width="15" height="17" viewBox="0 0 15 17">
            <path d="M7.5 0L15 4V13L7.5 17L0 13V4Z" fill="#ef7d22" />
            <path d="M7.5 8L15 4V13L7.5 17Z" fill="#d9620e" />
            <path d="M7.5 0L15 4L7.5 8L0 4Z" fill="#fbc08a" />
          </svg>
          <span className="text-[12px] font-['Liberation_Sans']">Cubo rubik v3*</span>
        </div>
        <X className="absolute right-[6px] top-[10px] w-[12px] h-[12px] text-[#777]" strokeWidth={1.6} />
      </div>
      <div className="ml-[4px] w-[28px] shrink-0 bg-[#b8b8b8] rounded-t flex items-center justify-center">
        <Plus className="w-[16px] h-[16px] text-[#777]" strokeWidth={3} />
      </div>
      <svg width="16" height="16" viewBox="0 0 16 16" className="ml-[12px] mt-[7px]">
        <circle cx="8" cy="8" r="6.5" fill="none" stroke="#555" strokeWidth="2.6" strokeDasharray="17 3 17 4" />
        <path d="M7 8L11 3L9 9Z" fill="#555" />
      </svg>
      <svg width="17" height="17" viewBox="0 0 17 17" className="ml-[16px] mt-[6px]">
        <circle cx="8.5" cy="8.5" r="7.5" fill="#777" stroke="#555" />
        <circle cx="8.5" cy="8.5" r="5.5" fill="#c9c9c9" stroke="#555" />
        <path d="M8.5 4.5V8.5H12" fill="none" stroke="#444" />
      </svg>
      <FaBell className="ml-[17px] mt-[6px] w-[15px] h-[16px]" />
      <FaQuestionCircle className="ml-[17px] mt-[6px] w-[17px] h-[17px]" />
      <div className="ml-[22px] mt-[1px] w-[24px] h-[26px] rounded-full bg-[#a3b4cc] overflow-hidden flex items-end justify-center">
        <FaUser className="w-[20px] h-[23px] text-[#56667c]" />
      </div>
    </div>
  );
}

function Timeline() {
  return (
    <div className="relative h-[44px] bg-[#f0f0f0] flex">
      <div className="w-[142px] shrink-0 flex items-center h-[44px] pt-[14px] pl-[11px] text-[#444]">
        <svg width="112" height="16" viewBox="0 0 112 16">
          <path d="M0 2H2.5V14H0ZM11 2V14L3 8Z" fill="#444" />
          <path d="M24 8L32 2V14ZM34 5H36V11H34Z" fill="#444" />
          <path d="M50 0L62 8L50 16Z" fill="#444" />
          <path d="M74 5H76V11H74ZM78 2L86 8L78 14Z" fill="#444" />
          <path d="M100 2L108 8L100 14ZM108.5 2H111V14H108.5Z" fill="#444" />
        </svg>
      </div>
      <div className="flex flex-col">
        <div className="mt-[8px] ml-[2px] h-[6px] flex gap-1">
          {timelineBars.map((b, i) => (
            <div key={i} className={`h-[6px] ${b.w} ${b.c}`} />
          ))}
        </div>
        <div className="mt-[-2px] flex">
          {timelineItems.map((kind, i) => (
            <div key={i} className="w-[24px] flex flex-col items-center">
              <div className={`w-[24px] h-[24px] flex items-center justify-center ${highlighted.has(i) ? "bg-[#e8e822]" : ""}`}>
                <TimelineIcon kind={kind} />
              </div>
              <div className="w-px h-[4px] bg-[#aaa]" />
            </div>
          ))}
        </div>
        <div className="h-[2px] w-[1718px] bg-[#cfcfcf]" />
      </div>
      <div className="absolute left-[1856px] top-0 w-[57px] h-[7px] bg-[#cccccc] rounded-b" />
      <svg width="12" height="34" viewBox="0 0 12 34" className="absolute left-[1864px] top-[10px]">
        <path d="M0 0H12V5L7 11V34H5V11L0 5Z" fill="#5e5e5e" />
      </svg>
      <FaCog className="absolute left-[1891px] top-[21px] w-[15px] h-[15px] text-[#666]" />
    </div>
  );
}

export default function App() {
  return (
    <div className="w-[1916px] h-[1034px] overflow-hidden flex flex-col bg-white font-['Liberation_Sans',sans-serif]">
      <div className="relative h-[23px] bg-white flex items-center shrink-0">
        <div className="absolute left-[840px] top-0 w-[48px] h-px bg-[#c8c820]" />
        <div className="absolute left-[888px] top-0 w-[193px] h-px bg-[#e0e0e0]" />
        <svg width="15" height="17" viewBox="0 0 15 17" className="ml-[3px]">
          <rect x="0" y="0" width="15" height="17" rx="1.5" fill="#ef7d22" />
          <rect x="0" y="12" width="15" height="5" fill="#8a4a1a" />
          <text x="4" y="10" fontSize="10" fontWeight="700" fill="#fff">F</text>
        </svg>
        <span className="ml-[5px] text-[11.5px] text-[#222] font-['Open_Sans',sans-serif]">Autodesk Fusion (Licencia educativa)</span>
        <Minus className="absolute left-[1798px] top-[5px] w-[12px] h-[12px] text-[#222]" strokeWidth={1.2} />
        <svg width="11" height="11" viewBox="0 0 11 11" className="absolute left-[1844px] top-[5px]">
          <rect x="0.5" y="2.5" width="7.5" height="8" fill="#fff" stroke="#222" />
          <path d="M3 2.5V0.5H10.5V8H8" fill="none" stroke="#222" />
        </svg>
        <X className="absolute left-[1888px] top-[3px] w-[15px] h-[15px] text-[#222]" strokeWidth={1.2} />
      </div>
      <div className="h-[4px] bg-[#cccccc] shrink-0" />
      <QuickBar />
      <Ribbon />
      <div className="relative flex-1 overflow-hidden bg-white">
        <svg width="1916" height="853" viewBox="0 137 1916 853" className="absolute inset-0">
          <FloorLines />
          <CubeDrawing />
          <ViewCube />
        </svg>
        <Navigator />
        <div className="absolute left-[4px] top-[824px] w-[300px] h-[24px] bg-[#f0f0f0] border border-[#cfcfcf] flex items-center text-[10px] text-[#555]">
          <span className="ml-[24px]">COMENTARIOS</span>
          <div className="ml-auto mr-[11px] w-[9px] h-[9px] rounded-full bg-[#222] flex items-center justify-center">
            <Plus className="w-[7px] h-[7px] text-white" strokeWidth={4} />
          </div>
        </div>
        <ViewBar />
      </div>
      <Timeline />
    </div>
  );
}
